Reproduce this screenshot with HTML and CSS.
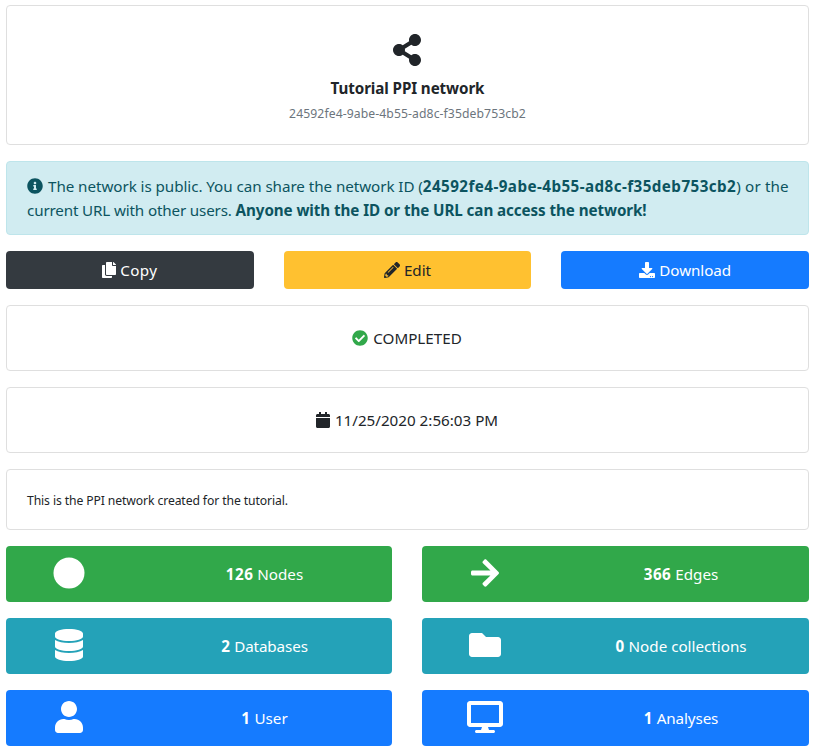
FILE: index.html
```html
<!DOCTYPE html>
<html lang="en">
<head>
<meta charset="utf-8">
<title>Tutorial PPI network</title>
<link rel="stylesheet" href="styles.css">
</head>
<body>
<main class="page">
  <section class="card card-header">
    <svg class="icon-share" viewBox="0 0 448 512"><path d="M352 320c-22.608 0-43.387 7.819-59.790 20.895l-102.486-64.054a96.551 96.551 0 0 0 0-41.683l102.486-64.054C308.613 184.181 329.392 192 352 192c53.019 0 96-42.981 96-96S405.019 0 352 0s-96 42.981-96 96c0 7.158.79 14.130 2.276 20.841L155.790 180.895C139.387 167.819 118.608 160 96 160c-53.019 0-96 42.981-96 96s42.981 96 96 96c22.608 0 43.387-7.819 59.790-20.895l102.486 64.054A96.301 96.301 0 0 0 256 416c0 53.019 42.981 96 96 96s96-42.981 96-96-42.981-96-96-96z"/></svg>
    <h1 class="title">Tutorial PPI network</h1>
    <p class="network-id">24592fe4-9abe-4b55-ad8c-f35deb753cb2</p>
  </section>

  <section class="alert">
    <div class="line"><svg class="icon" viewBox="0 0 512 512"><path d="M256 8C119.043 8 8 119.083 8 256c0 136.997 111.043 248 248 248s248-111.003 248-248C504 119.083 392.957 8 256 8zm0 110c23.196 0 42 18.804 42 42s-18.804 42-42 42-42-18.804-42-42 18.804-42 42-42zm56 254c0 6.627-5.373 12-12 12h-88c-6.627 0-12-5.373-12-12v-24c0-6.627 5.373-12 12-12h12v-64h-12c-6.627 0-12-5.373-12-12v-24c0-6.627 5.373-12 12-12h64c6.627 0 12 5.373 12 12v100h12c6.627 0 12 5.373 12 12v24z"/></svg><span class="intro">The network is public. You can share the network ID (</span><b class="alert-id">24592fe4-9abe-4b55-ad8c-f35deb753cb2</b><span class="outro">) or the</span></div>
    <div class="line"><span class="current">current URL with other users. </span><b class="warning">Anyone with the ID or the URL can access the network!</b></div>
  </section>

  <div class="buttons">
    <button class="btn dark"><svg class="icon narrow" viewBox="0 0 448 512"><path d="M320 448v40c0 13.255-10.745 24-24 24H24c-13.255 0-24-10.745-24-24V120c0-13.255 10.745-24 24-24h72v296c0 30.879 25.121 56 56 56h168zm0-344V0H152c-13.255 0-24 10.745-24 24v368c0 13.255 10.745 24 24 24h272c13.255 0 24-10.745 24-24V128H344c-13.200 0-24-10.800-24-24zm120.971-31.029L375.029 7.029A24 24 0 0 0 358.059 0H352v96h96v-6.059a24 24 0 0 0-7.029-16.970z"/></svg><span class="copy-text">Copy</span></button>
    <button class="btn yellow"><svg class="icon" viewBox="0 0 512 512"><path d="M497.900 142.100l-46.100 46.100c-4.700 4.700-12.300 4.700-17 0l-111-111c-4.700-4.700-4.700-12.300 0-17l46.100-46.100c18.700-18.700 49.100-18.700 67.900 0l60.100 60.100c18.800 18.700 18.800 49.100 0 67.900zM284.200 99.800L21.600 362.400.4 483.900c-2.900 16.400 11.400 30.600 27.800 27.800l121.500-21.300 262.600-262.600c4.700-4.700 4.700-12.300 0-17l-111-111c-4.800-4.700-12.400-4.700-17.100 0zM124.100 339.900c-5.500-5.500-5.500-14.300 0-19.800l154-154c5.500-5.500 14.300-5.500 19.800 0s5.500 14.300 0 19.800l-154 154c-5.500 5.500-14.300 5.500-19.800 0zM88 424h48v36.300l-64.500 11.300-31.100-31.100L51.700 376H88v48z"/></svg><span>Edit</span></button>
    <button class="btn blue"><svg class="icon" viewBox="0 0 512 512"><path d="M216 0h80c13.300 0 24 10.700 24 24v168h87.700c17.800 0 26.700 21.500 14.100 34.100L269.700 378.300c-7.500 7.500-19.800 7.500-27.300 0L90.100 226.100c-12.600-12.600-3.700-34.100 14.100-34.100H192V24c0-13.300 10.700-24 24-24zm296 376v112c0 13.300-10.700 24-24 24H24c-13.300 0-24-10.700-24-24V376c0-13.300 10.700-24 24-24h146.700l49 49c20.100 20.100 52.500 20.100 72.600 0l49-49H488c13.300 0 24 10.700 24 24zm-124 88c0-11-9-20-20-20s-20 9-20 20 9 20 20 20 20-9 20-20zm64 0c0-11-9-20-20-20s-20 9-20 20 9 20 20 20 20-9 20-20z"/></svg><span class="download-text">Download</span></button>
  </div>

  <section class="card card-row">
    <svg class="icon success" viewBox="0 0 512 512"><path d="M504 256c0 136.967-111.033 248-248 248S8 392.967 8 256 119.033 8 256 8s248 111.033 248 248zM227.314 387.314l184-184c6.248-6.248 6.248-16.379 0-22.627l-22.627-22.627c-6.248-6.249-16.379-6.249-22.628 0L216 308.118l-70.059-70.059c-6.248-6.248-16.379-6.248-22.628 0l-22.627 22.627c-6.248 6.248-6.248 16.379 0 22.627l104 104c6.249 6.249 16.379 6.249 22.628.001z"/></svg><span>COMPLETED</span>
  </section>

  <section class="card card-row">
    <svg class="icon narrow" viewBox="0 0 448 512"><path d="M12 192h424c6.600 0 12 5.400 12 12v260c0 26.500-21.500 48-48 48H48c-26.500 0-48-21.500-48-48V204c0-6.600 5.400-12 12-12zm436-44v-36c0-26.500-21.500-48-48-48h-48V12c0-6.600-5.400-12-12-12h-40c-6.600 0-12 5.400-12 12v52H160V12c0-6.600-5.400-12-12-12h-40c-6.600 0-12 5.400-12 12v52H48C21.500 64 0 85.500 0 112v36c0 6.600 5.400 12 12 12h424c6.600 0 12-5.400 12-12z"/></svg><span>11/25/2020 2:56:03 PM</span>
  </section>

  <section class="card card-description">This is the PPI network created for the tutorial.</section>

  <div class="tiles">
    <div class="tile green"><svg class="tile-icon" viewBox="0 0 512 512"><circle cx="256" cy="256" r="248"/></svg><div class="tile-label"><b>126</b> Nodes</div></div>
    <div class="tile green"><svg class="tile-icon" viewBox="0 0 448 512"><path d="M190.500 66.900l22.200-22.200c9.400-9.400 24.600-9.400 33.900 0L441 239c9.400 9.400 9.400 24.600 0 33.900L246.600 467.300c-9.400 9.400-24.600 9.400-33.900 0l-22.200-22.200c-9.500-9.500-9.300-25 .4-34.300L311.400 296H24c-13.300 0-24-10.700-24-24v-32c0-13.300 10.700-24 24-24h287.400L190.900 101.200c-9.800-9.300-10-24.800-.4-34.300z"/></svg><div class="tile-label"><b>366</b> Edges</div></div>
    <div class="tile teal"><svg class="tile-icon" viewBox="0 0 448 512"><path d="M448 73.143v45.714C448 159.143 347.667 192 224 192S0 159.143 0 118.857V73.143C0 32.857 100.333 0 224 0s224 32.857 224 73.143zM448 176v102.857C448 319.143 347.667 352 224 352S0 319.143 0 278.857V176c48.125 33.143 136.208 48.572 224 48.572S399.874 209.143 448 176zm0 160v102.857C448 479.143 347.667 512 224 512S0 479.143 0 438.857V336c48.125 33.143 136.208 48.572 224 48.572S399.874 369.143 448 336z"/></svg><div class="tile-label databases"><b>2</b> Databases</div></div>
    <div class="tile teal"><svg class="tile-icon" viewBox="0 0 512 512"><path d="M464 128H272l-64-64H48C21.490 64 0 85.490 0 112v288c0 26.510 21.490 48 48 48h416c26.510 0 48-21.490 48-48V176c0-26.510-21.490-48-48-48z"/></svg><div class="tile-label"><b>0</b> Node collections</div></div>
    <div class="tile blue"><svg class="tile-icon" viewBox="0 0 448 512"><path d="M224 256c70.700 0 128-57.300 128-128S294.700 0 224 0 96 57.300 96 128s57.300 128 128 128zm89.600 32h-16.700c-22.200 10.200-46.900 16-72.900 16s-50.600-5.800-72.900-16h-16.700C60.200 288 0 348.200 0 422.400V464c0 26.500 21.500 48 48 48h352c26.500 0 48-21.500 48-48v-41.600c0-74.200-60.200-134.400-134.400-134.400z"/></svg><div class="tile-label"><b>1</b> User</div></div>
    <div class="tile blue"><svg class="tile-icon" viewBox="0 0 576 512"><path d="M528 0H48C21.500 0 0 21.500 0 48v320c0 26.500 21.500 48 48 48h192l-16 48h-72c-13.300 0-24 10.700-24 24s10.700 24 24 24h272c13.300 0 24-10.700 24-24s-10.700-24-24-24h-72l-16-48h192c26.500 0 48-21.500 48-48V48c0-26.500-21.500-48-48-48zm-16 352H64V64h448v288z"/></svg><div class="tile-label analyses"><b>1</b> Analyses</div></div>
  </div>
</main>
</body>
</html>
```

FILE: styles.css
```css
* { box-sizing: border-box; }
body {
  margin: 0;
  background: #fff;
  color: #212529;
  font: 15.2px/24px "Noto Sans", "Open Sans", sans-serif;
  white-space: nowrap;
}
b { font-weight: 700; }
svg { display: block; flex: none; fill: currentColor; }
.page {
  display: flex;
  flex-direction: column;
  gap: 16px;
  padding: 5px 7px 0 6px;
}
.card {
  border: 1px solid #dfdfdf;
  border-radius: 4px;
}
.card-header {
  height: 140px;
  display: flex;
  flex-direction: column;
  align-items: center;
  padding-top: 28px;
}
.icon-share { width: 28px; height: 32px; margin-right: 1px; }
.title { margin: 10px 0 0; font-size: 15.2px; line-height: 24px; letter-spacing: -0.1px; }
.network-id { margin: 3px 0 0; font-size: 12.2px; line-height: 21px; color: #6c757d; letter-spacing: 0.09px; }
.icon { width: 16px; height: 16px; }
.icon.narrow { width: 14px; }
.alert {
  height: 74px;
  padding: 12px 20px;
  color: #0c5460;
  background: #d1ecf1;
  border: 1px solid #bee5eb;
  border-radius: 4px;
}
.line { display: flex; align-items: center; white-space: pre; }
.line .icon { margin-right: 5px; }
.intro { letter-spacing: -0.055px; }
.alert-id { letter-spacing: 0.44px; }
.outro { letter-spacing: 0.15px; }
.current { letter-spacing: -0.15px; }
.warning { letter-spacing: -0.08px; }
.buttons { display: grid; grid-template-columns: repeat(3, 1fr); gap: 30px; }
.btn {
  height: 38px;
  display: flex;
  align-items: center;
  justify-content: center;
  gap: 4px;
  padding: 0;
  border: 0;
  border-radius: 4px;
  color: #fff;
  font: inherit;
}
.copy-text { letter-spacing: 0.35px; }
.download-text { letter-spacing: -0.08px; }
.dark { background: #343a40; }
.yellow { background: #ffc130; color: #212529; }
.blue { background: #157bff; }
.green { background: #31a84a; }
.teal { background: #24a2b8; }
.card-row {
  height: 66px;
  display: flex;
  align-items: center;
  justify-content: center;
  gap: 5px;
  padding-right: 1px;
}
.success { color: #31a84a; }
.card-description {
  height: 61px;
  padding: 19px 20px 17px;
  font-size: 12.2px;
  letter-spacing: -0.11px;
}
.tiles { display: grid; grid-template-columns: 386px 387px; gap: 16px 30px; }
.tile {
  height: 56px;
  display: grid;
  grid-template-columns: 126px 1fr;
  align-items: center;
  border-radius: 4px;
  color: #fff;
}
.tile-icon { height: 32px; justify-self: center; margin-bottom: 2px; }
.tile-label { text-align: center; padding-left: 5px; }
.tile-label b { letter-spacing: 0.5px; }
.databases, .analyses { letter-spacing: -0.1px; }
```
